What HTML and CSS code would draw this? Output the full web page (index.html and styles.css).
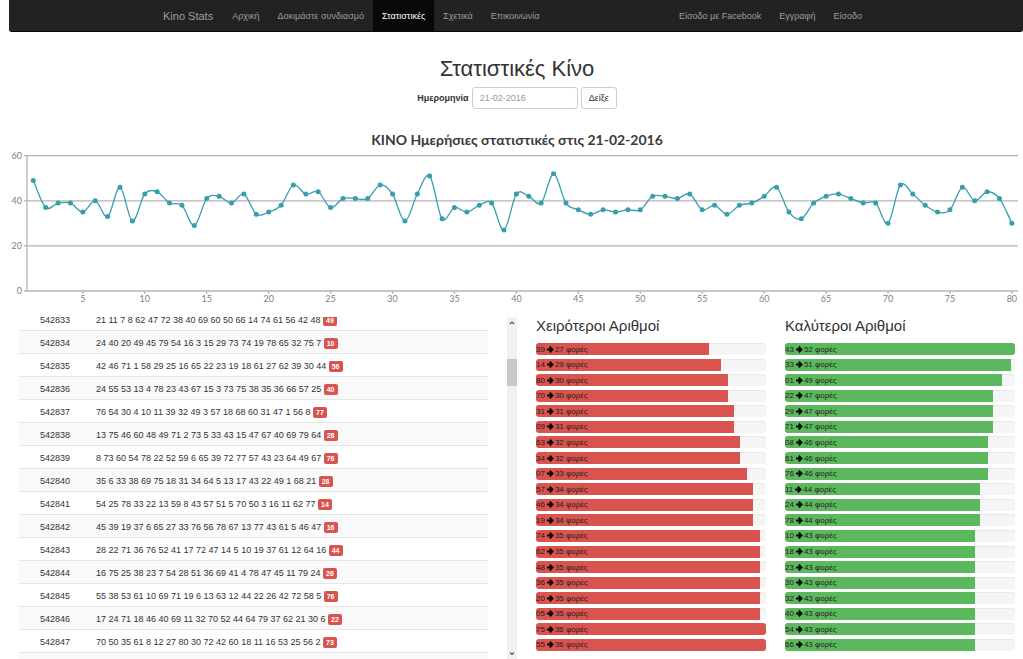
FILE: index.html
```html
<!DOCTYPE html>
<html lang="el">
<head>
<meta charset="utf-8">
<title>Kino Stats</title>
<link rel="stylesheet" href="styles.css">
</head>
<body>
<nav class="navbar">
  <div class="navbar-inner">
    <a class="brand" href="#">Kino Stats</a>
    <ul class="nav">
      <li><a href="#">Αρχική</a></li>
      <li><a href="#">Δοκιμάστε συνδιασμό</a></li>
      <li><a class="active" href="#">Στατιστικές</a></li>
      <li><a href="#">Σχετικά</a></li>
      <li><a href="#">Επικοινωνία</a></li>
    </ul>
    <ul class="nav nav-right">
      <li><a href="#">Είσοδο με Facebook</a></li>
      <li><a href="#">Εγγραφή</a></li>
      <li><a href="#">Είσοδο</a></li>
    </ul>
  </div>
</nav>

<header class="page-head">
  <h1>Στατιστικές Κίνο</h1>
  <form class="date-form">
    <label for="date">Ημερομηνία</label>
    <input id="date" type="text" placeholder="21-02-2016">
    <button type="button">Δείξε</button>
  </form>
</header>

<svg class="chart" id="chart" viewBox="0 0 1014 184" role="img"></svg>

<main class="panels">
  <section class="draws">
    <div class="draws-view" id="draws-view">
      <table class="draws-table"><tbody id="draws"></tbody></table>
    </div>
    <div class="scrollbar">
      <svg viewBox="0 0 10 10"><path d="M3 6.5 5 4.5 7 6.5"/></svg>
      <div class="track"><div class="thumb"></div></div>
      <svg viewBox="0 0 10 10"><path d="M3 4 5 6 7 4"/></svg>
    </div>
  </section>
  <section class="ranking">
    <h2>Χειρότεροι Αριθμοί</h2>
    <ol class="bars worst" id="worst"></ol>
  </section>
  <section class="ranking">
    <h2>Καλύτεροι Αριθμοί</h2>
    <ol class="bars best" id="best"></ol>
  </section>
</main>
<script src="app.js"></script>
</body>
</html>
```

FILE: styles.css
```css
* { box-sizing: border-box; }

body {
  display: flex;
  flex-direction: column;
  height: 100vh;
  margin: 0 0 0 9px;
  overflow: hidden;
  background: #fff;
  color: #333;
  font: 9px/13px "Liberation Sans", Arial, sans-serif;
}

a { text-decoration: none; }

ul, ol { list-style: none; margin: 0; padding: 0; }

/* Navigation */
.navbar {
  flex: none;
  padding-right: 8px;
  background: #222;
  border-bottom: 1px solid #080808;
  border-radius: 0 0 3px 3px;
}

.navbar-inner {
  display: flex;
  max-width: 718px;
  margin: 0 auto;
}

.brand {
  padding: 10px 10px 8px;
  color: #9d9d9d;
  font-size: 11px;
}

.nav { display: flex; }

.nav a {
  display: block;
  padding: 10px 9px 8px;
  color: #9d9d9d;
}

.nav .active { background: #080808; color: #fff; }

.nav-right { margin-left: auto; }

/* Title and date form */
.page-head { flex: none; padding-left: 2px; text-align: center; }

h1 {
  margin: 24px 0 5px;
  font-size: 22px;
  font-weight: 400;
  line-height: 26px;
}

.date-form {
  display: flex;
  justify-content: center;
  align-items: center;
  gap: 3px;
}

.date-form label { font-weight: 700; }

.date-form input,
.date-form button {
  height: 22px;
  border: 1px solid #ccc;
  border-radius: 3px;
  background: #fff;
  color: #333;
  font: inherit;
}

.date-form input { width: 106px; padding: 0 7px; }
.date-form input::placeholder { color: #999; }
.date-form button { padding: 0 7px; }

/* Chart */
.chart {
  display: block;
  flex: none;
  width: 100%;
  margin-top: 16px;
  font-family: Lato, "Noto Sans", sans-serif;
}

.chart-title { font-size: 14px; font-weight: 700; text-anchor: middle; fill: #3a3a3a; }
.axis-label { font-size: 9px; fill: #808080; }
.axis-label.x { text-anchor: middle; }
.axis-label.y { text-anchor: end; }
.grid-line { stroke: #b4b4b4; stroke-width: 1.3; }
.series { fill: none; stroke: #369ead; stroke-width: 1.3; }
.point { fill: #369ead; }

/* Lower panels */
.panels {
  display: grid;
  grid-template-columns: 498fr 230fr 230fr;
  grid-template-rows: minmax(0, 1fr);
  gap: 19px;
  flex: 1;
  min-height: 0;
  margin-top: 8px;
  padding: 0 8px 0 10px;
}

.draws { display: flex; gap: 19px; min-height: 0; }
.draws-view { flex: 1; overflow: hidden; }

.draws-table { width: 100%; border-collapse: collapse; }
.draws-table tr { height: 23px; }
.draws-table tr:nth-child(even) { background: #f9f9f9; }
.draws-table td { height: 23px; padding: 2px 0 0; border-top: 1px solid #e6e6e6; }
.draws-table td:first-child { width: 77px; padding-left: 21px; }

.badge {
  display: inline-block;
  padding: 0 3px;
  border-radius: 2px;
  background: #d9534f;
  color: #fff;
  font-size: 7px;
  font-weight: 700;
  line-height: 11px;
}

.scrollbar {
  display: flex;
  flex-direction: column;
  width: 10px;
  background: #f1f1f1;
}

.scrollbar svg { width: 10px; height: 11px; fill: none; stroke: #555; stroke-width: 1.2; }
.track { flex: 1; padding-top: 31px; }
.thumb { height: 27px; background: #c8c8c8; }

.ranking {
  display: flex;
  flex-direction: column;
  min-height: 0;
  padding-bottom: 8px;
}

h2 {
  margin: 0 0 9px;
  font-size: 15px;
  font-weight: 400;
  line-height: 17px;
}

.bars {
  display: flex;
  flex: 1;
  flex-direction: column;
  justify-content: space-between;
}

.bars li {
  height: 12px;
  border-radius: 3px;
  overflow: hidden;
  background: #f5f5f5;
  box-shadow: inset 0 1px 1px #e8e8e8;
}

.bar {
  display: flex;
  align-items: center;
  gap: 1px;
  height: 12px;
  color: #222;
  font-size: 8px;
  line-height: 13px;
  white-space: nowrap;
}

.worst .bar { background: #d9534f; }
.best .bar { background: #5cb85c; }
.bar svg { width: 8px; height: 7px; fill: none; stroke: #000; stroke-width: 2; }
```

FILE: app.js
```js
const counts = [
  49, 37, 39, 39, 35, 40, 33, 46, 31, 43, 44, 39, 38, 29, 41, 42, 39, 43, 34, 35,
  38, 47, 43, 44, 37, 41, 41, 41, 47, 43, 31, 43, 51, 32, 37, 35, 38, 39, 27, 43,
  42, 39, 52, 39, 36, 34, 36, 35, 36, 36, 42, 42, 41, 43, 36, 38, 34, 38, 39, 42,
  46, 35, 32, 39, 42, 43, 41, 39, 39, 30, 47, 43, 38, 35, 36, 46, 40, 44, 41, 30
];

const worst = [39, 14, 80, 70, 31, 9, 63, 34, 7, 57, 46, 19, 74, 62, 48, 36, 20, 5, 75, 55];
const best = [43, 33, 1, 22, 29, 71, 8, 61, 76, 11, 24, 78, 10, 18, 23, 30, 32, 40, 54, 66];

const draws = [
  [542833, "21 11 7 8 62 47 72 38 40 69 60 50 66 14 74 61 56 42 48", 49],
  [542834, "24 40 20 49 45 79 54 16 3 15 29 73 74 19 78 65 32 75 7", 10],
  [542835, "42 46 71 1 58 29 25 16 65 22 23 19 18 61 27 62 39 30 44", 56],
  [542836, "24 55 53 13 4 78 23 43 67 15 3 73 75 38 35 36 66 57 25", 40],
  [542837, "76 54 30 4 10 11 39 32 49 3 57 18 68 60 31 47 1 56 8", 77],
  [542838, "13 75 46 60 48 49 71 2 73 5 33 43 15 47 67 40 69 79 64", 28],
  [542839, "8 73 60 54 78 22 52 59 6 65 39 72 77 57 43 23 64 49 67", 76],
  [542840, "35 6 33 38 69 75 18 31 34 64 5 13 17 43 22 49 1 68 21", 28],
  [542841, "54 25 78 33 22 13 59 8 43 57 51 5 70 50 3 16 11 62 77", 14],
  [542842, "45 39 19 37 6 65 27 33 76 56 78 67 13 77 43 61 5 46 47", 16],
  [542843, "28 22 71 36 76 52 41 17 72 47 14 5 10 19 37 61 12 64 16", 44],
  [542844, "16 75 25 38 23 7 54 28 51 36 69 41 4 78 47 45 11 79 24", 26],
  [542845, "55 38 53 61 10 69 71 19 6 13 63 12 44 22 26 42 72 58 5", 76],
  [542846, "17 24 71 18 46 40 69 11 32 70 52 44 64 79 37 62 21 30 6", 22],
  [542847, "70 50 35 61 8 12 27 80 30 72 42 60 18 11 16 53 25 56 2", 73]
];

// Chart geometry, in viewBox units
const left = 18, right = 1009, bottom = 166, unit = 2.255;
const px = n => 24.3 + (n - 1) * 12.387;
const py = v => bottom - v * unit;

function drawChart() {
  let out = '<text class="chart-title" x="508" y="20">ΚΙΝΟ Ημερήσιες στατιστικές στις 21-02-2016</text>';
  for (const v of [0, 20, 40, 60]) {
    out += `<line class="grid-line" x1="${left - 3}" x2="${right}" y1="${py(v)}" y2="${py(v)}"/>`;
    out += `<text class="axis-label y" x="13" y="${py(v) + 3}">${v}</text>`;
  }
  out += `<line class="grid-line" x1="${left}" x2="${left}" y1="${py(60)}" y2="${bottom}"/>`;
  for (let n = 5; n <= 80; n += 5) {
    out += `<line class="grid-line" x1="${px(n)}" x2="${px(n)}" y1="${bottom}" y2="${bottom + 3}"/>`;
    out += `<text class="axis-label x" x="${px(n)}" y="${bottom + 11}">${n}</text>`;
  }
  const pts = counts.map((v, i) => [px(i + 1), py(v)]);
  let d = `M${pts[0]}`;
  for (let i = 0; i < pts.length - 1; i++) {
    const a = pts[i - 1] || pts[i], b = pts[i], c = pts[i + 1], e = pts[i + 2] || c;
    d += `C${b[0] + (c[0] - a[0]) / 6} ${b[1] + (c[1] - a[1]) / 6} ${c[0] - (e[0] - b[0]) / 6} ${c[1] - (e[1] - b[1]) / 6} ${c}`;
  }
  out += `<path class="series" d="${d}"/>`;
  out += pts.map(p => `<circle class="point" cx="${p[0]}" cy="${p[1]}" r="2.5"/>`).join("");
  document.getElementById("chart").innerHTML = out;
}

function drawBars(id, numbers) {
  const max = Math.max(...numbers.map(n => counts[n - 1]));
  const arrow = '<svg viewBox="0 0 8 7"><path d="M1 3.5H6.5M3.7 .7 6.5 3.5 3.7 6.3"/></svg>';
  document.getElementById(id).innerHTML = numbers.map(n => {
    const c = counts[n - 1];
    return `<li><div class="bar" style="width:${c / max * 100}%"><span>${String(n).padStart(2, "0")}</span>${arrow}<span>${c} φορές</span></div></li>`;
  }).join("");
}

drawChart();
drawBars("worst", worst);
drawBars("best", best);
document.getElementById("draws").innerHTML = draws.map(([id, nums, bonus]) =>
  `<tr><td>${id}</td><td>${nums} <span class="badge">${bonus}</span></td></tr>`
).join("") + "<tr><td></td><td></td></tr>";
document.getElementById("draws-view").scrollTop = 10;
```
